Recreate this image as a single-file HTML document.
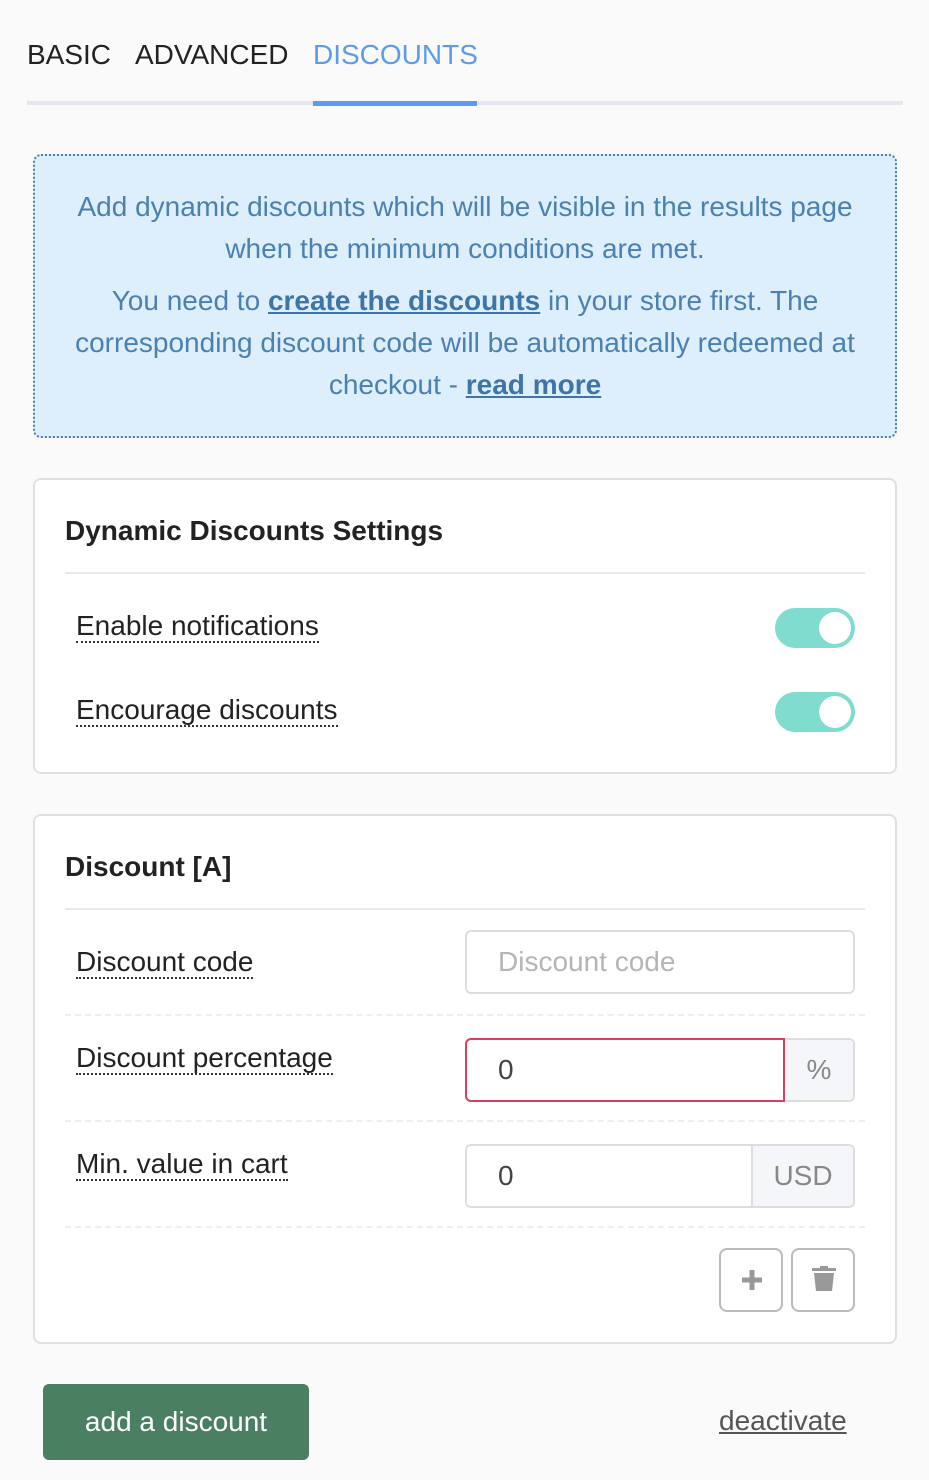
<!DOCTYPE html>
<html><head><style>
*{box-sizing:border-box;margin:0;padding:0}
body{width:929px;height:1480px;background:#fafafa;font-family:"Liberation Sans",sans-serif;position:relative;overflow:hidden;color:#222}
.a{position:absolute}
.tab{font-size:28px;top:39px;color:#222}
.info{left:33px;top:154px;width:864px;height:284px;background:#ddeefc;border:2px dotted #4a7fb0;border-radius:8px;color:#4a80b2;font-size:28px;text-align:center;line-height:42px;padding-top:30px}
.info b{text-decoration:underline;color:#3f74a6}
.card{background:#fff;border:2px solid #e0e0e0;border-radius:8px;left:33px;width:864px}
h3{position:absolute;left:65px;font-size:28px;font-weight:bold;color:#222}
.hr{position:absolute;left:65px;width:800px;border-top:2px solid #e8e8e8}
.dash{position:absolute;left:65px;width:800px;border-top:2px dashed #eee}
.lbl{position:absolute;left:76px;font-size:28px;color:#222;border-bottom:2px dotted #333;line-height:30px}
.tog{position:absolute;left:775px;width:80px;height:40px;border-radius:20px;background:#7fdccf}
.tog:after{content:"";position:absolute;right:4px;top:4px;width:32px;height:32px;border-radius:50%;background:#fff}
.inp{position:absolute;left:465px;height:64px;border:2px solid #ddd;border-radius:6px;background:#fff;font-size:28px;padding-left:31px;line-height:60px;color:#444;overflow:hidden}
.add{position:absolute;right:0;top:0;bottom:0;background:#f5f6fa;border-left:2px solid #ddd;color:#888;text-align:center}
.btn{position:absolute;top:1248px;width:64px;height:64px;border:2px solid #bbb;border-radius:8px;background:#fff}
</style></head><body>
<div class="a tab" style="left:27px">BASIC</div>
<div class="a tab" style="left:135px">ADVANCED</div>
<div class="a tab" style="left:313px;color:#5b9bf0">DISCOUNTS</div>
<div class="a" style="left:27px;top:101px;width:876px;height:4px;background:#e6e7ee"></div>
<div class="a" style="left:313px;top:101px;width:164px;height:5px;background:#5b9bf0"></div>
<div class="a info">Add dynamic discounts which will be visible in the results page<br>when the minimum conditions are met.<div style="margin-top:10px">You need to <b>create the discounts</b> in your store first. The<br>corresponding discount code will be automatically redeemed at<br>checkout - <b>read more</b></div></div>

<div class="a card" style="top:478px;height:296px"></div>
<h3 style="top:515px">Dynamic Discounts Settings</h3>
<div class="hr" style="top:572px"></div>
<div class="lbl" style="top:611px">Enable notifications</div>
<div class="tog" style="top:608px"></div>
<div class="lbl" style="top:695px">Encourage discounts</div>
<div class="tog" style="top:692px"></div>

<div class="a card" style="top:814px;height:530px"></div>
<h3 style="top:851px">Discount [A]</h3>
<div class="hr" style="top:908px"></div>
<div class="lbl" style="top:947px">Discount code</div>
<div class="inp" style="top:930px;width:390px;color:#b5b5b5">Discount code</div>
<div class="dash" style="top:1014px"></div>
<div class="lbl" style="top:1043px">Discount percentage</div>
<div class="inp" style="top:1038px;width:390px">0<div class="add" style="width:70px;border-left:2px solid #d9405f">%</div></div>
<div class="a" style="left:465px;top:1038px;width:320px;height:64px;border:2px solid #d9405f;border-radius:6px 0 0 6px"></div>
<div class="dash" style="top:1120px"></div>
<div class="lbl" style="top:1149px">Min. value in cart</div>
<div class="inp" style="top:1144px;width:390px">0<div class="add" style="width:102px">USD</div></div>
<div class="dash" style="top:1226px"></div>
<div class="btn" style="left:719px"><svg width="60" height="60" viewBox="0 0 60 60"><path d="M31 20v20M21 30h20" stroke="#999" stroke-width="5"/></svg></div>
<div class="btn" style="left:791px"><svg width="60" height="60" viewBox="0 0 60 60"><path d="M19 18h24v3H19zM27 16h8v3h-8zM21 23h20l-2 18H23z" fill="#999"/></svg></div>

<div class="a" style="left:43px;top:1384px;width:266px;height:76px;background:#4a7f62;border-radius:6px;color:#fff;font-size:28px;text-align:center;line-height:76px">add a discount</div>
<div class="a" style="left:719px;top:1405px;font-size:28px;color:#555;text-decoration:underline">deactivate</div>
</body></html>
